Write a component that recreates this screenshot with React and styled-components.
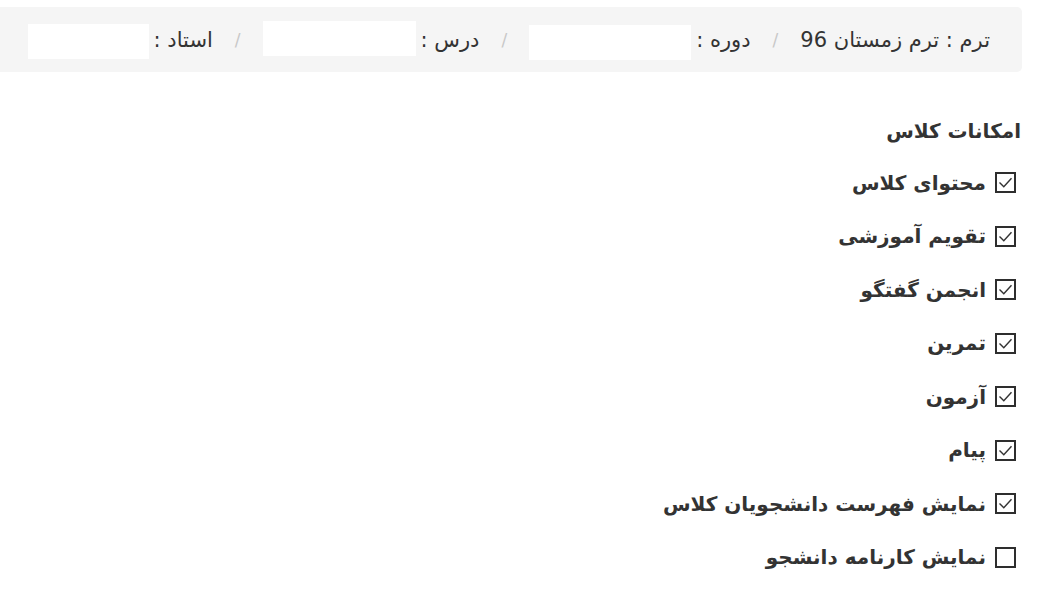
import React from "react";
import styled, { createGlobalStyle } from "styled-components";

const Global = createGlobalStyle`
  html, body { margin: 0; padding: 0; background: #fff; }
  body { font-family: "DejaVu Sans", "Noto Sans", sans-serif; color: #333; direction: rtl; overflow: hidden; }
`;

const Page = styled.div`
  width: 1040px;
  height: 592px;
  box-sizing: border-box;
  padding: 7px 18px 0 0;
  overflow: hidden;
`;

const Breadcrumb = styled.ul`
  list-style: none;
  margin: 0 0 0 -20px;
  height: 65px;
  box-sizing: border-box;
  padding: 0 32px 0 0;
  background: #f5f5f5;
  border-radius: 5px;
  display: flex;
  align-items: center;
  font-size: 21px;
  color: #333;
  white-space: nowrap;
`;

const Crumb = styled.li`
  display: flex;
  align-items: center;
  gap: 5px;
`;

const Sep = styled.li`
  color: #c8c8c8;
  padding: 0 22px;
  font-size: 17px;
`;

const Blank = styled.span`
  display: inline-block;
  width: ${(p) => p.$w}px;
  height: 35px;
  background: #fff;
  transform: translateY(${(p) => p.$dy || 0}px);
`;

const Section = styled.div`
  padding-top: 45px;
  display: flex;
  flex-direction: column;
  align-items: flex-start;
`;

const Title = styled.div`
  font-weight: bold;
  font-size: 20px;
  line-height: 28px;
  margin: 0 1px 11px 0;
`;

const Row = styled.label`
  display: flex;
  align-items: center;
  gap: 9px;
  height: 53.5px;
  padding-right: 6px;
`;

const Box = styled.span`
  width: 21px;
  height: 21px;
  box-sizing: border-box;
  border: 2px solid #2e2e2e;
  display: flex;
  align-items: center;
  justify-content: center;
`;

const Label = styled.span`
  font-weight: bold;
  font-size: 20px;
  color: #333;
`;

const Check = () => (
  <svg width="15" height="15" viewBox="0 0 15 15">
    <path d="M1.5 7.5 L5.8 11.8 L13.5 3.2" fill="none" stroke="#333" strokeWidth="1.4" />
  </svg>
);

const items = [
  ["محتوای کلاس", true],
  ["تقویم آموزشی", true],
  ["انجمن گفتگو", true],
  ["تمرین", true],
  ["آزمون", true],
  ["پیام", true],
  ["نمایش فهرست دانشجویان کلاس", true],
  ["نمایش کارنامه دانشجو", false],
];

export default function App() {
  return (
    <Page>
      <Global />
      <Breadcrumb>
        <Crumb>ترم : ترم زمستان 96</Crumb>
        <Sep>/</Sep>
        <Crumb>
          دوره :<Blank $w={162} $dy={3} />
        </Crumb>
        <Sep>/</Sep>
        <Crumb>
          درس :<Blank $w={153} $dy={-1} />
        </Crumb>
        <Sep>/</Sep>
        <Crumb>
          استاد :<Blank $w={121} $dy={2} />
        </Crumb>
      </Breadcrumb>
      <Section>
        <Title>امکانات کلاس</Title>
        {items.map(([t, c]) => (
          <Row key={t}>
            <Box>{c && <Check />}</Box>
            <Label>{t}</Label>
          </Row>
        ))}
      </Section>
    </Page>
  );
}
